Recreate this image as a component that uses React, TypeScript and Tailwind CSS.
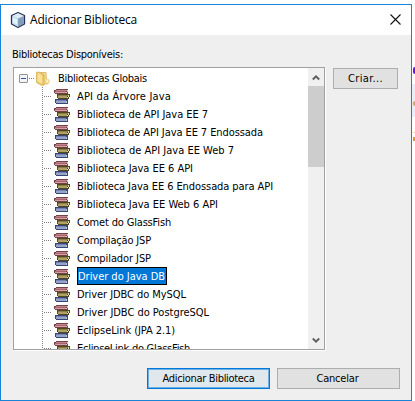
import { useLayoutEffect, useRef, useState } from "react";

const FONT = "font-['DejaVu_Sans_Condensed','DejaVu_Sans',sans-serif] [font-stretch:condensed]";

/* Text whose tracking is adjusted so that it fills a given width. */
function FitText({ text, width, className = "" }: { text: string; width: number; className?: string }) {
  const ref = useRef<HTMLSpanElement>(null);
  const [spacing, setSpacing] = useState(0);
  useLayoutEffect(() => {
    const el = ref.current;
    if (!el) return;
    const previous = parseFloat(el.style.letterSpacing) || 0;
    const natural = el.getBoundingClientRect().width - previous * text.length;
    const next = (width - natural) / text.length;
    setSpacing(next);
  }, [text, width]);
  return (
    <span ref={ref} className={`inline-block whitespace-pre ${className}`} style={{ letterSpacing: spacing }}>
      {text}
    </span>
  );
}

function CubeIcon() {
  return (
    <svg width="16" height="18" viewBox="0 0 16 18" className="shrink-0">
      <path d="M8 1.500 14.500 4.500V13L8 16.500 1.500 13V4.500Z" fill="#a9c4dc" stroke="#2b3158" strokeWidth="1.300" strokeLinejoin="round" />
      <path d="M2.300 5 8 2.300 13.700 5 8 7.500Z" fill="#dfecf3" />
      <path d="M2.300 5.300 8 7.800V15.700L2.300 12.600Z" fill="#c5e1f0" />
      <path d="M13.700 5.300 8 7.800V15.700l5.700-3.100Z" fill="#829cbc" />
      <path d="M3 6.500 7 8.300v5L3 11.500Z" fill="#e2f5fa" />
    </svg>
  );
}

function FolderIcon() {
  return (
    <svg width="14" height="15" viewBox="0 0 14 15" className="shrink-0">
      <path d="M5 1.500h5l.5 6.500 2.500 1v2.500l-1.500 1.500H6Z" fill="#f3d98f" stroke="#d9b45c" strokeWidth=".8" />
      <path d="M10.500 8.500h2v3h-2Z" fill="#fdf3d0" />
      <path d="M.6 1.200h3.400L8 4v10l-2.200.4L.6 11.500Z" fill="#edca70" stroke="#d3a745" strokeWidth=".8" />
      <path d="M1.500 2.200H3l3 2.200v8.400L1.500 10.500Z" fill="#f8e09a" />
    </svg>
  );
}

function BooksIcon() {
  return (
    <svg width="16" height="15" viewBox="0 0 16 15" className="shrink-0" shapeRendering="crispEdges">
      {/* blue book */}
      <path d="M1 10h13v4l-1 1H2l-1-1Z" fill="#39466f" />
      <path d="M2 11h10v1H2Z" fill="#7584b0" />
      <path d="M2 12h10v2H2Z" fill="#94a2cc" />
      <path d="M12 12h1v2h-1Z" fill="#c3cadf" />
      {/* olive book */}
      <path d="M3 5h12l1 1-1 4H4l-1-1Z" fill="#51471f" />
      <path d="M4 6h10v1H4Z" fill="#8a7d45" />
      <path d="M4 7h9v2H4Z" fill="#aea067" />
      <path d="M14 6h1v2h-1Zm-1 2h1v1h-1Z" fill="#e6dfc5" />
      {/* red book */}
      <path d="M2 0h12v4l-1 1H1L0 4V1h2Z" fill="#773f46" />
      <path d="M2 1h11v1H2Z" fill="#bd838a" />
      <path d="M1 2h11v1H1Z" fill="#a9666e" />
      <path d="M1 3h11v1H1Z" fill="#d0a0a5" />
      <path d="M13 1h1v2h-1Zm-1 2h1v1h-1Z" fill="#dcc5c2" />
    </svg>
  );
}

function Chevron({ down = false }: { down?: boolean }) {
  return (
    <svg width="8" height="7" viewBox="0 0 8 7" className={down ? "rotate-180" : ""}>
      <path d="M.8 5.500 4 2.300l3.200 3.200" fill="none" stroke="#606060" strokeWidth="2" />
    </svg>
  );
}

const items: { label: string; width: number; selected?: boolean }[] = [
  { label: "API da Árvore Java", width: 94 },
  { label: "Biblioteca de API Java EE 7", width: 131 },
  { label: "Biblioteca de API Java EE 7 Endossada", width: 186 },
  { label: "Biblioteca de API Java EE Web 7", width: 157 },
  { label: "Biblioteca Java EE 6 API", width: 116 },
  { label: "Biblioteca Java EE 6 Endossada para API", width: 196 },
  { label: "Biblioteca Java EE Web 6 API", width: 141 },
  { label: "Comet do GlassFish", width: 94 },
  { label: "Compilação JSP", width: 74 },
  { label: "Compilador JSP", width: 74 },
  { label: "Driver do Java DB", width: 87, selected: true },
  { label: "Driver JDBC do MySQL", width: 109 },
  { label: "Driver JDBC do PostgreSQL", width: 132 },
  { label: "EclipseLink (JPA 2.1)", width: 98 },
  { label: "EclipseLink do GlassFish", width: 113 },
];

function DotsH({ className }: { className: string }) {
  return <i className={`block h-px shrink-0 bg-[repeating-linear-gradient(90deg,#808080_0_1px,transparent_1px_2px)] ${className}`} />;
}

export default function App() {
  return (
    <div className={`flex h-[401px] w-[415px] overflow-hidden bg-white pt-1 text-[11px] leading-[16px] text-black ${FONT}`}>
      <div className="flex h-[397px] w-[412px] shrink-0 flex-col border border-[#1883d7] bg-[#efefef]">
        <header className="flex h-[30px] shrink-0 items-center bg-white pl-[9px] pr-[10px]">
          <CubeIcon />
          <FitText
            text="Adicionar Biblioteca"
            width={107}
            className="ml-1 font-['Open_Sans',sans-serif] text-[12px] [font-stretch:normal]"
          />
          <svg width="11" height="11" viewBox="0 0 11 11" className="mb-[2px] ml-auto">
            <path d="m.5.5 10 10m0-10-10 10" stroke="#111" strokeWidth="1.100" />
          </svg>
        </header>
        <div className="h-[32px] shrink-0 pl-[11px] pt-3">
          <FitText text="Bibliotecas Disponíveis:" width={111} />
        </div>
        <div className="flex shrink-0 pl-3">
          <div className="flex h-[283px] w-[312px] border border-[#a0a0a0] bg-white shadow-[1px_1px_0_#fff]">
            <div className="h-[281px] w-[294px] overflow-hidden pt-px">
              <div className="flex h-[18px] items-center pl-[5px]">
                <span className="flex size-[9px] shrink-0 items-center justify-center rounded-[1px] border border-[#919191] bg-[#f4f4f4]">
                  <i className="block h-px w-[5px] bg-[#3c50a0]" />
                </span>
                <DotsH className="ml-px w-[6px]" />
                <span className="ml-px"><FolderIcon /></span>
                <FitText text="Bibliotecas Globais" width={89} className="ml-2 pt-[2px]" />
              </div>
              <ul className="ml-7 bg-[repeating-linear-gradient(180deg,#808080_0_1px,transparent_1px_2px)] bg-[length:1px_100%] bg-no-repeat">
                {items.map((item) => (
                  <li key={item.label} className="flex h-[18px] items-center">
                    <DotsH className="ml-[2px] w-[8px]" />
                    <span className="ml-[2px] flex h-[18px] pt-[2px]"><BooksIcon /></span>
                    <span
                      className={`ml-[7px] flex h-[18px] items-center ${
                        item.selected ? "w-[90px] bg-[#0078d7] pl-px text-white outline outline-1 -outline-offset-1 outline-black" : ""
                      }`}
                    >
                      <FitText text={item.label} width={item.width} className="pt-[2px]" />
                    </span>
                  </li>
                ))}
              </ul>
            </div>
            <div className="flex w-4 flex-col items-center bg-[#f0f0f0]">
              <div className="flex h-[18px] items-center"><Chevron /></div>
              <div className="h-[81px] w-full bg-[#cdcdcd]" />
              <div className="mt-auto flex h-[17px] items-center"><Chevron down /></div>
            </div>
          </div>
          <button className="ml-2 mt-px flex h-[21px] w-[65px] items-center justify-center border border-[#adadad] bg-[#e1e1e1]">
            <FitText text="Criar..." width={35} />
          </button>
        </div>
        <footer className="mt-[18px] flex gap-[7px] pl-[146px]">
          <button className="flex h-[21px] w-[123px] items-center justify-center border border-[#0078d7] bg-[#e1e8ed] shadow-[inset_0_0_0_1px_#6bb0e8]">
            <FitText text="Adicionar Biblioteca" width={92} />
          </button>
          <button className="flex h-[21px] w-[123px] items-center justify-center border border-[#adadad] bg-[#e1e1e1]">
            <FitText text="Cancelar" width={42} className="mr-[2px]" />
          </button>
        </footer>
      </div>
      <aside className="flex w-[3px] shrink-0 flex-col items-end pt-[63px]">
        <i className="block h-[7px] w-[2px] rounded-l-sm bg-[#6516e3]" />
        <div className="mt-[10px] flex h-[33px] w-full flex-col items-end bg-[#e9effa] pt-[17px]">
          <i className="block h-[5px] w-[2px] rounded-l-sm bg-[#d3a668]" />
        </div>
        <i className="mt-[15px] block h-px w-[2px] bg-[#fbd985]" />
        <i className="mt-[4px] block h-[4px] w-[2px] bg-[#df9a27]" />
      </aside>
    </div>
  );
}
